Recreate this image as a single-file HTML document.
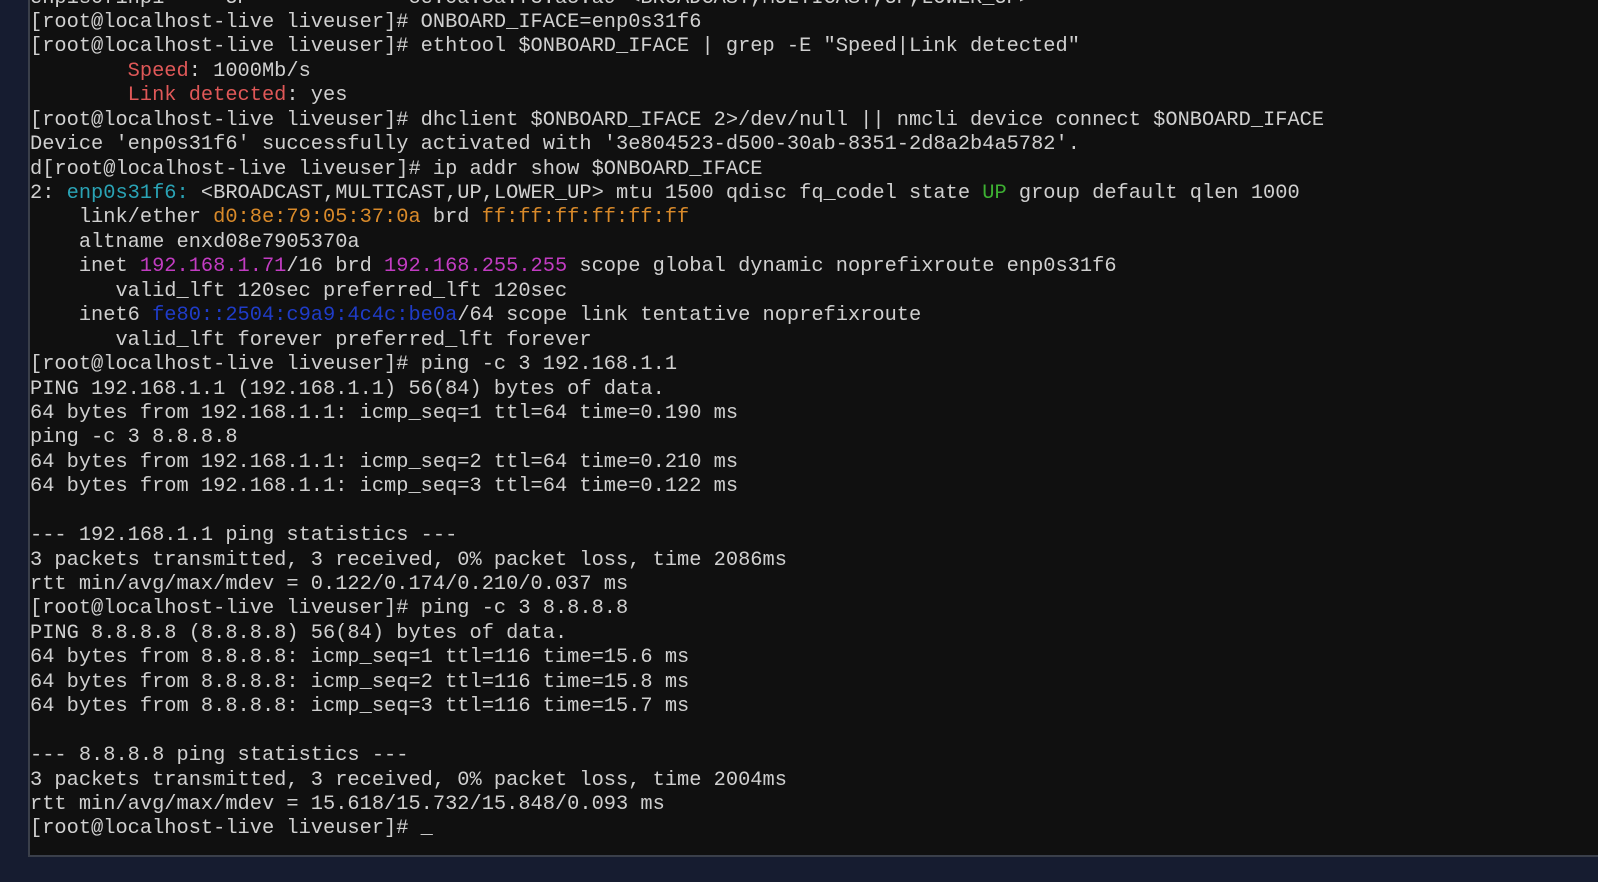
<!DOCTYPE html>
<html><head><meta charset="utf-8"><style>
html,body{margin:0;padding:0;width:1598px;height:882px;overflow:hidden;background:#161c30;}
.term{position:absolute;left:28px;top:0;width:1570px;height:857px;background:#101010;border-left:2px solid #3a3f4a;border-bottom:2px solid #3a3f4a;box-sizing:border-box;overflow:hidden;}
pre{position:absolute;left:0px;top:-13.5px;margin:0;font-family:"Liberation Mono",monospace;font-size:20.35px;line-height:24.43px;color:#d0d0d0;letter-spacing:0;}
.r{color:#e05858}.c{color:#2aa3b5}.o{color:#d98a2a}.m{color:#c23cc2}.b{color:#1f3cc8}.g{color:#3db032}
</style></head><body>
<div class="term"><pre>enp1s0f1np1     UP             ce:0a:5a:f3:a5:a9 &lt;BROADCAST,MULTICAST,UP,LOWER_UP&gt;
[root@localhost-live liveuser]# ONBOARD_IFACE=enp0s31f6
[root@localhost-live liveuser]# ethtool $ONBOARD_IFACE | grep -E "Speed|Link detected"
        <span class="r">Speed</span>: 1000Mb/s
        <span class="r">Link detected</span>: yes
[root@localhost-live liveuser]# dhclient $ONBOARD_IFACE 2&gt;/dev/null || nmcli device connect $ONBOARD_IFACE
Device 'enp0s31f6' successfully activated with '3e804523-d500-30ab-8351-2d8a2b4a5782'.
d[root@localhost-live liveuser]# ip addr show $ONBOARD_IFACE
2: <span class="c">enp0s31f6:</span> &lt;BROADCAST,MULTICAST,UP,LOWER_UP&gt; mtu 1500 qdisc fq_codel state <span class="g">UP</span> group default qlen 1000
    link/ether <span class="o">d0:8e:79:05:37:0a</span> brd <span class="o">ff:ff:ff:ff:ff:ff</span>
    altname enxd08e7905370a
    inet <span class="m">192.168.1.71</span>/16 brd <span class="m">192.168.255.255</span> scope global dynamic noprefixroute enp0s31f6
       valid_lft 120sec preferred_lft 120sec
    inet6 <span class="b">fe80::2504:c9a9:4c4c:be0a</span>/64 scope link tentative noprefixroute
       valid_lft forever preferred_lft forever
[root@localhost-live liveuser]# ping -c 3 192.168.1.1
PING 192.168.1.1 (192.168.1.1) 56(84) bytes of data.
64 bytes from 192.168.1.1: icmp_seq=1 ttl=64 time=0.190 ms
ping -c 3 8.8.8.8
64 bytes from 192.168.1.1: icmp_seq=2 ttl=64 time=0.210 ms
64 bytes from 192.168.1.1: icmp_seq=3 ttl=64 time=0.122 ms

--- 192.168.1.1 ping statistics ---
3 packets transmitted, 3 received, 0% packet loss, time 2086ms
rtt min/avg/max/mdev = 0.122/0.174/0.210/0.037 ms
[root@localhost-live liveuser]# ping -c 3 8.8.8.8
PING 8.8.8.8 (8.8.8.8) 56(84) bytes of data.
64 bytes from 8.8.8.8: icmp_seq=1 ttl=116 time=15.6 ms
64 bytes from 8.8.8.8: icmp_seq=2 ttl=116 time=15.8 ms
64 bytes from 8.8.8.8: icmp_seq=3 ttl=116 time=15.7 ms

--- 8.8.8.8 ping statistics ---
3 packets transmitted, 3 received, 0% packet loss, time 2004ms
rtt min/avg/max/mdev = 15.618/15.732/15.848/0.093 ms
[root@localhost-live liveuser]# _</pre></div>
</body></html>
